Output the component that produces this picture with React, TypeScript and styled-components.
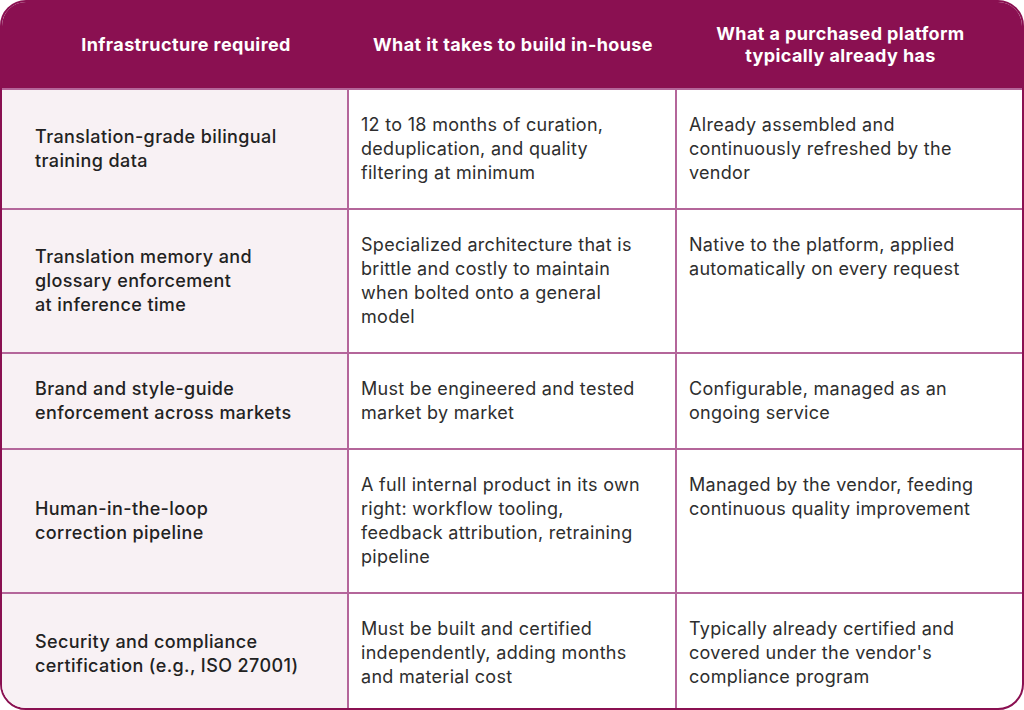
import React from 'react';
import styled, { createGlobalStyle } from 'styled-components';

interface Row {
  need: string[];
  build: string[];
  platform: string[];
}

const rows: Row[] = [
  {
    need: ['Translation-grade bilingual', 'training data'],
    build: ['12 to 18 months of curation,', 'deduplication, and quality', 'filtering at minimum'],
    platform: ['Already assembled and', 'continuously refreshed by the', 'vendor'],
  },
  {
    need: ['Translation memory and', 'glossary enforcement', 'at inference time'],
    build: [
      'Specialized architecture that is',
      'brittle and costly to maintain',
      'when bolted onto a general',
      'model',
    ],
    platform: ['Native to the platform, applied', 'automatically on every request'],
  },
  {
    need: ['Brand and style-guide', 'enforcement across markets'],
    build: ['Must be engineered and tested', 'market by market'],
    platform: ['Configurable, managed as an', 'ongoing service'],
  },
  {
    need: ['Human-in-the-loop', 'correction pipeline'],
    build: [
      'A full internal product in its own',
      'right: workflow tooling,',
      'feedback attribution, retraining',
      'pipeline',
    ],
    platform: ['Managed by the vendor, feeding', 'continuous quality improvement'],
  },
  {
    need: ['Security and compliance', 'certification (e.g., ISO 27001)'],
    build: ['Must be built and certified', 'independently, adding months', 'and material cost'],
    platform: ['Typically already certified and', "covered under the vendor's", 'compliance program'],
  },
];

const Lines = ({ lines }: { lines: string[] }) => (
  <>
    {lines.map((l, i) => (
      <React.Fragment key={i}>
        {l}
        {i < lines.length - 1 && <br />}
      </React.Fragment>
    ))}
  </>
);

export default function App() {
  return (
    <>
      <GlobalStyle />
      <TableWrap>
        <HeadCell $first>Infrastructure required</HeadCell>
        <HeadCell>What it takes to build in-house</HeadCell>
        <HeadCell $last>
          What a purchased platform
          <br />
          typically already has
        </HeadCell>
        {rows.map((row, i) => {
          const isLast = i === rows.length - 1;
          return (
            <React.Fragment key={i}>
              <NeedCell $lastRow={isLast}>
                <Lines lines={row.need} />
              </NeedCell>
              <TextCell $lastRow={isLast}>
                <Lines lines={row.build} />
              </TextCell>
              <TextCell $lastRow={isLast} $lastCol>
                <Lines lines={row.platform} />
              </TextCell>
            </React.Fragment>
          );
        })}
      </TableWrap>
    </>
  );
}

const GlobalStyle = createGlobalStyle`
  * {
    box-sizing: border-box;
  }
  body {
    margin: 0;
    background: #ffffff;
    font-family: Inter, 'Noto Sans', sans-serif;
  }
`;

const TableWrap = styled.div`
  width: 1024px;
  height: 710px;
  border: 2px solid #8a1051;
  border-radius: 26px;
  overflow: hidden;
  display: grid;
  grid-template-columns: 347px 328px 1fr;
  grid-template-rows: 88px auto auto auto auto minmax(0, 1fr);
  background: #ffffff;
`;

const HeadCell = styled.div<{ $first?: boolean; $last?: boolean }>`
  background: #8a1051;
  color: #ffffff;
  font-weight: 700;
  font-size: 18px;
  letter-spacing: 0.4px;
  line-height: 22px;
  text-align: center;
  display: flex;
  align-items: center;
  justify-content: center;
  padding: 0 ${(p) => (p.$last ? '30px' : '12px')} 0 ${(p) => (p.$first ? '33px' : '12px')};
  border-bottom: 2px solid #b4669a;
`;

const BodyCell = styled.div<{ $lastRow?: boolean; $lastCol?: boolean }>`
  font-size: 18px;
  line-height: 24px;
  letter-spacing: 0.3px;
  color: #2e2e2e;
  padding-top: 23px;
  padding-bottom: ${(p) => (p.$lastRow ? '18px' : '23px')};
  border-bottom: ${(p) => (p.$lastRow ? 'none' : '2px solid #b4669a')};
  border-right: ${(p) => (p.$lastCol ? 'none' : '2px solid #b4669a')};
`;

const NeedCell = styled(BodyCell)`
  background: #f8f1f4;
  color: #222222;
  font-weight: 500;
  letter-spacing: 0.4px;
  display: flex;
  align-items: center;
  padding-left: 33px;
  padding-right: 4px;
`;

const TextCell = styled(BodyCell)`
  padding-left: 12px;
  padding-right: 4px;
`;
